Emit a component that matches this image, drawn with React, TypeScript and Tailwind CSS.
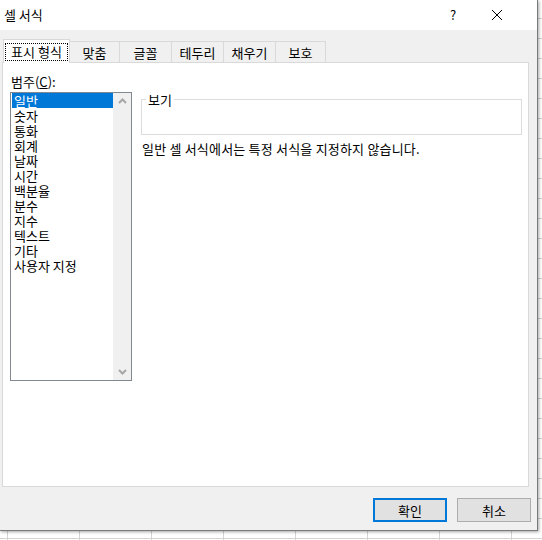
import React from "react";

const font = { fontFamily: '"Noto Sans CJK KR", "Noto Sans", sans-serif' };

const tabs = [
  { label: "표시 형식", w: "w-[67px]" },
  { label: "맞춤", w: "w-[50px]" },
  { label: "글꼴", w: "w-[52px]" },
  { label: "테두리", w: "w-[52px]" },
  { label: "채우기", w: "w-[52px]" },
  { label: "보호", w: "w-[50px]" },
];

const items = ["일반", "숫자", "통화", "회계", "날짜", "시간", "백분율", "분수", "지수", "텍스트", "기타", "사용자 지정"];

export default function App() {
  return (
    <div
      className="w-[542px] h-[540px] overflow-hidden bg-white bg-[linear-gradient(to_right,#d4d4d4_1px,transparent_1px),linear-gradient(to_bottom,#d4d4d4_1px,transparent_1px)] bg-[size:72px_20px] bg-[position:7px_18px] text-[13px] text-black"
      style={font}
    >
      <div className="w-[538px] h-[531px] bg-[#f0f0f0] border-r border-b border-[#7a7a7a] shadow-[1px_1px_3px_rgba(0,0,0,0.35)] flex flex-col">
        {/* title bar */}
        <div className="h-[30px] bg-white flex items-center shrink-0">
          <span className="pl-[4px] leading-[15px] -mt-[2px]">셀 서식</span>
          <div className="ml-auto flex items-center h-full">
            <div className="w-[30px] h-full flex items-center justify-center text-[13px]">?</div>
            <div className="w-[46px] ml-[6px] mr-[17px] h-full flex items-center justify-center">
              <svg width="12" height="12" viewBox="0 0 12 12">
                <path d="M1 1 L11 11 M11 1 L1 11" stroke="#000" strokeWidth="1" fill="none" />
              </svg>
            </div>
          </div>
        </div>

        {/* tabs */}
        <div className="mt-[9px] ml-[3px] flex items-end h-[23px] relative z-10">
          {tabs.map((t, i) =>
            i === 0 ? (
              <div
                key={t.label}
                className={`${t.w} h-[24px] -mb-[1px] bg-white border border-b-0 border-[#d9d9d9] flex items-center justify-center`}
              >
                <div className="w-[63px] h-[18px] border border-dotted border-black flex items-center justify-center leading-[15px]">
                  {t.label}
                </div>
              </div>
            ) : (
              <div
                key={t.label}
                className={`${t.w} h-[21px] bg-[#f0f0f0] border border-l-0 border-b-0 border-[#d9d9d9] flex items-center justify-center leading-[15px]`}
              >
                {t.label}
              </div>
            )
          )}
        </div>

        {/* panel */}
        <div className="ml-[2px] w-[527px] h-[425px] bg-white border border-[#d9d9d9] flex">
          {/* left column */}
          <div className="pl-[7px] pt-[11px] flex flex-col">
            <div className="h-[18px] leading-[15px] pl-[1px]">
              범주(<span className="underline">C</span>):
            </div>
            <div className="w-[122px] h-[289px] border border-[#828790] flex">
              <div className="flex-1 flex flex-col pl-[1px]">
                {items.map((it, i) => (
                  <div
                    key={it}
                    className={`h-[15px] leading-[15px] pl-[2px] whitespace-nowrap ${
                      i === 0 ? "bg-[#0078d7] text-white" : ""
                    }`}
                  >
                    {it}
                  </div>
                ))}
              </div>
              <div className="w-[18px] bg-[#f0f0f0] flex flex-col justify-between items-center py-[5px]">
                <svg width="9" height="6" viewBox="0 0 9 6">
                  <path d="M1 5 L4.5 1.5 L8 5" stroke="#a6a6a6" strokeWidth="2" fill="none" />
                </svg>
                <svg width="9" height="6" viewBox="0 0 9 6">
                  <path d="M1 1 L4.5 4.5 L8 1" stroke="#a6a6a6" strokeWidth="2" fill="none" />
                </svg>
              </div>
            </div>
          </div>

          {/* right column */}
          <div className="ml-[9px] pt-[36px] flex flex-col">
            <div className="relative w-[381px] h-[36px] border border-[#dcdcdc]">
              <span className="absolute left-[4px] -top-[8px] bg-white px-[2px] leading-[15px]">보기</span>
            </div>
            <div className="mt-[6px] pl-[1px] leading-[15px] whitespace-nowrap tracking-[0.2px]">일반 셀 서식에서는 특정 서식을 지정하지 않습니다.</div>
          </div>
        </div>

        {/* buttons */}
        <div className="mt-[11px] flex justify-end gap-[10px] pr-[6px]">
          <button className="w-[74px] h-[24px] bg-[#e1e1e1] border-2 border-[#0078d7] flex items-center justify-center leading-[15px]">
            확인
          </button>
          <button className="w-[74px] h-[24px] bg-[#e1e1e1] border border-[#adadad] flex items-center justify-center leading-[15px]">
            취소
          </button>
        </div>
      </div>
    </div>
  );
}
